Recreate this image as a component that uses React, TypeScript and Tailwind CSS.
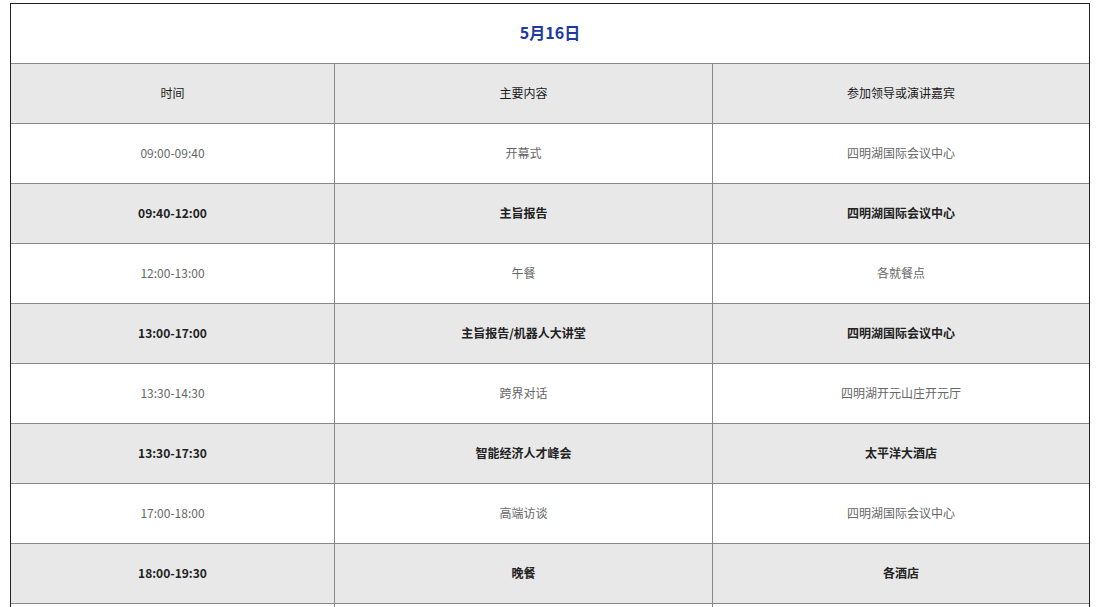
const rows = [
  { time: "09:00-09:40", content: "开幕式", guest: "四明湖国际会议中心" },
  { time: "09:40-12:00", content: "主旨报告", guest: "四明湖国际会议中心" },
  { time: "12:00-13:00", content: "午餐", guest: "各就餐点" },
  { time: "13:00-17:00", content: "主旨报告/机器人大讲堂", guest: "四明湖国际会议中心" },
  { time: "13:30-14:30", content: "跨界对话", guest: "四明湖开元山庄开元厅" },
  { time: "13:30-17:30", content: "智能经济人才峰会", guest: "太平洋大酒店" },
  { time: "17:00-18:00", content: "高端访谈", guest: "四明湖国际会议中心" },
  { time: "18:00-19:30", content: "晚餐", guest: "各酒店" },
  { time: "", content: "", guest: "" },
];

export default function App() {
  return (
    <div className="bg-white min-h-screen pt-[3px] pl-[10px] font-['Noto_Sans_CJK_SC','Microsoft_YaHei',sans-serif]">
      <div className="w-[1080px] border-l border-r border-t border-[#222]">
        {/* Title */}
        <div className="h-[60px] flex items-center justify-center pb-[4px] border-b border-[#888]">
          <span className="text-[16px] font-bold text-[#1c3a9f]">5月16日</span>
        </div>

        {/* Header */}
        <Row bg="bg-[#e8e8e8]" text="text-[#1a1a1a]" cells={["时间", "主要内容", "参加领导或演讲嘉宾"]} />

        {rows.map((r, i) => (
          <Row
            key={i}
            bg={i % 2 === 1 ? "bg-[#e8e8e8]" : "bg-white"}
            text={i % 2 === 1 ? "text-[#222] font-bold" : "text-[#666]"}
            cells={[r.time, r.content, r.guest]}
          />
        ))}
      </div>
    </div>
  );
}

function Row({ cells, bg, text }: { cells: string[]; bg: string; text: string }) {
  return (
    <div className={`grid grid-cols-[324px_378px_1fr] h-[60px] border-b border-[#888] ${bg}`}>
      <div className={`flex items-center justify-center pb-[2px] border-r border-[#888] text-[12px] ${text}`}>{cells[0]}</div>
      <div className={`flex items-center justify-center pb-[2px] border-r border-[#888] text-[12px] ${text}`}>{cells[1]}</div>
      <div className={`flex items-center justify-center pb-[2px] text-[12px] ${text}`}>{cells[2]}</div>
    </div>
  );
}
